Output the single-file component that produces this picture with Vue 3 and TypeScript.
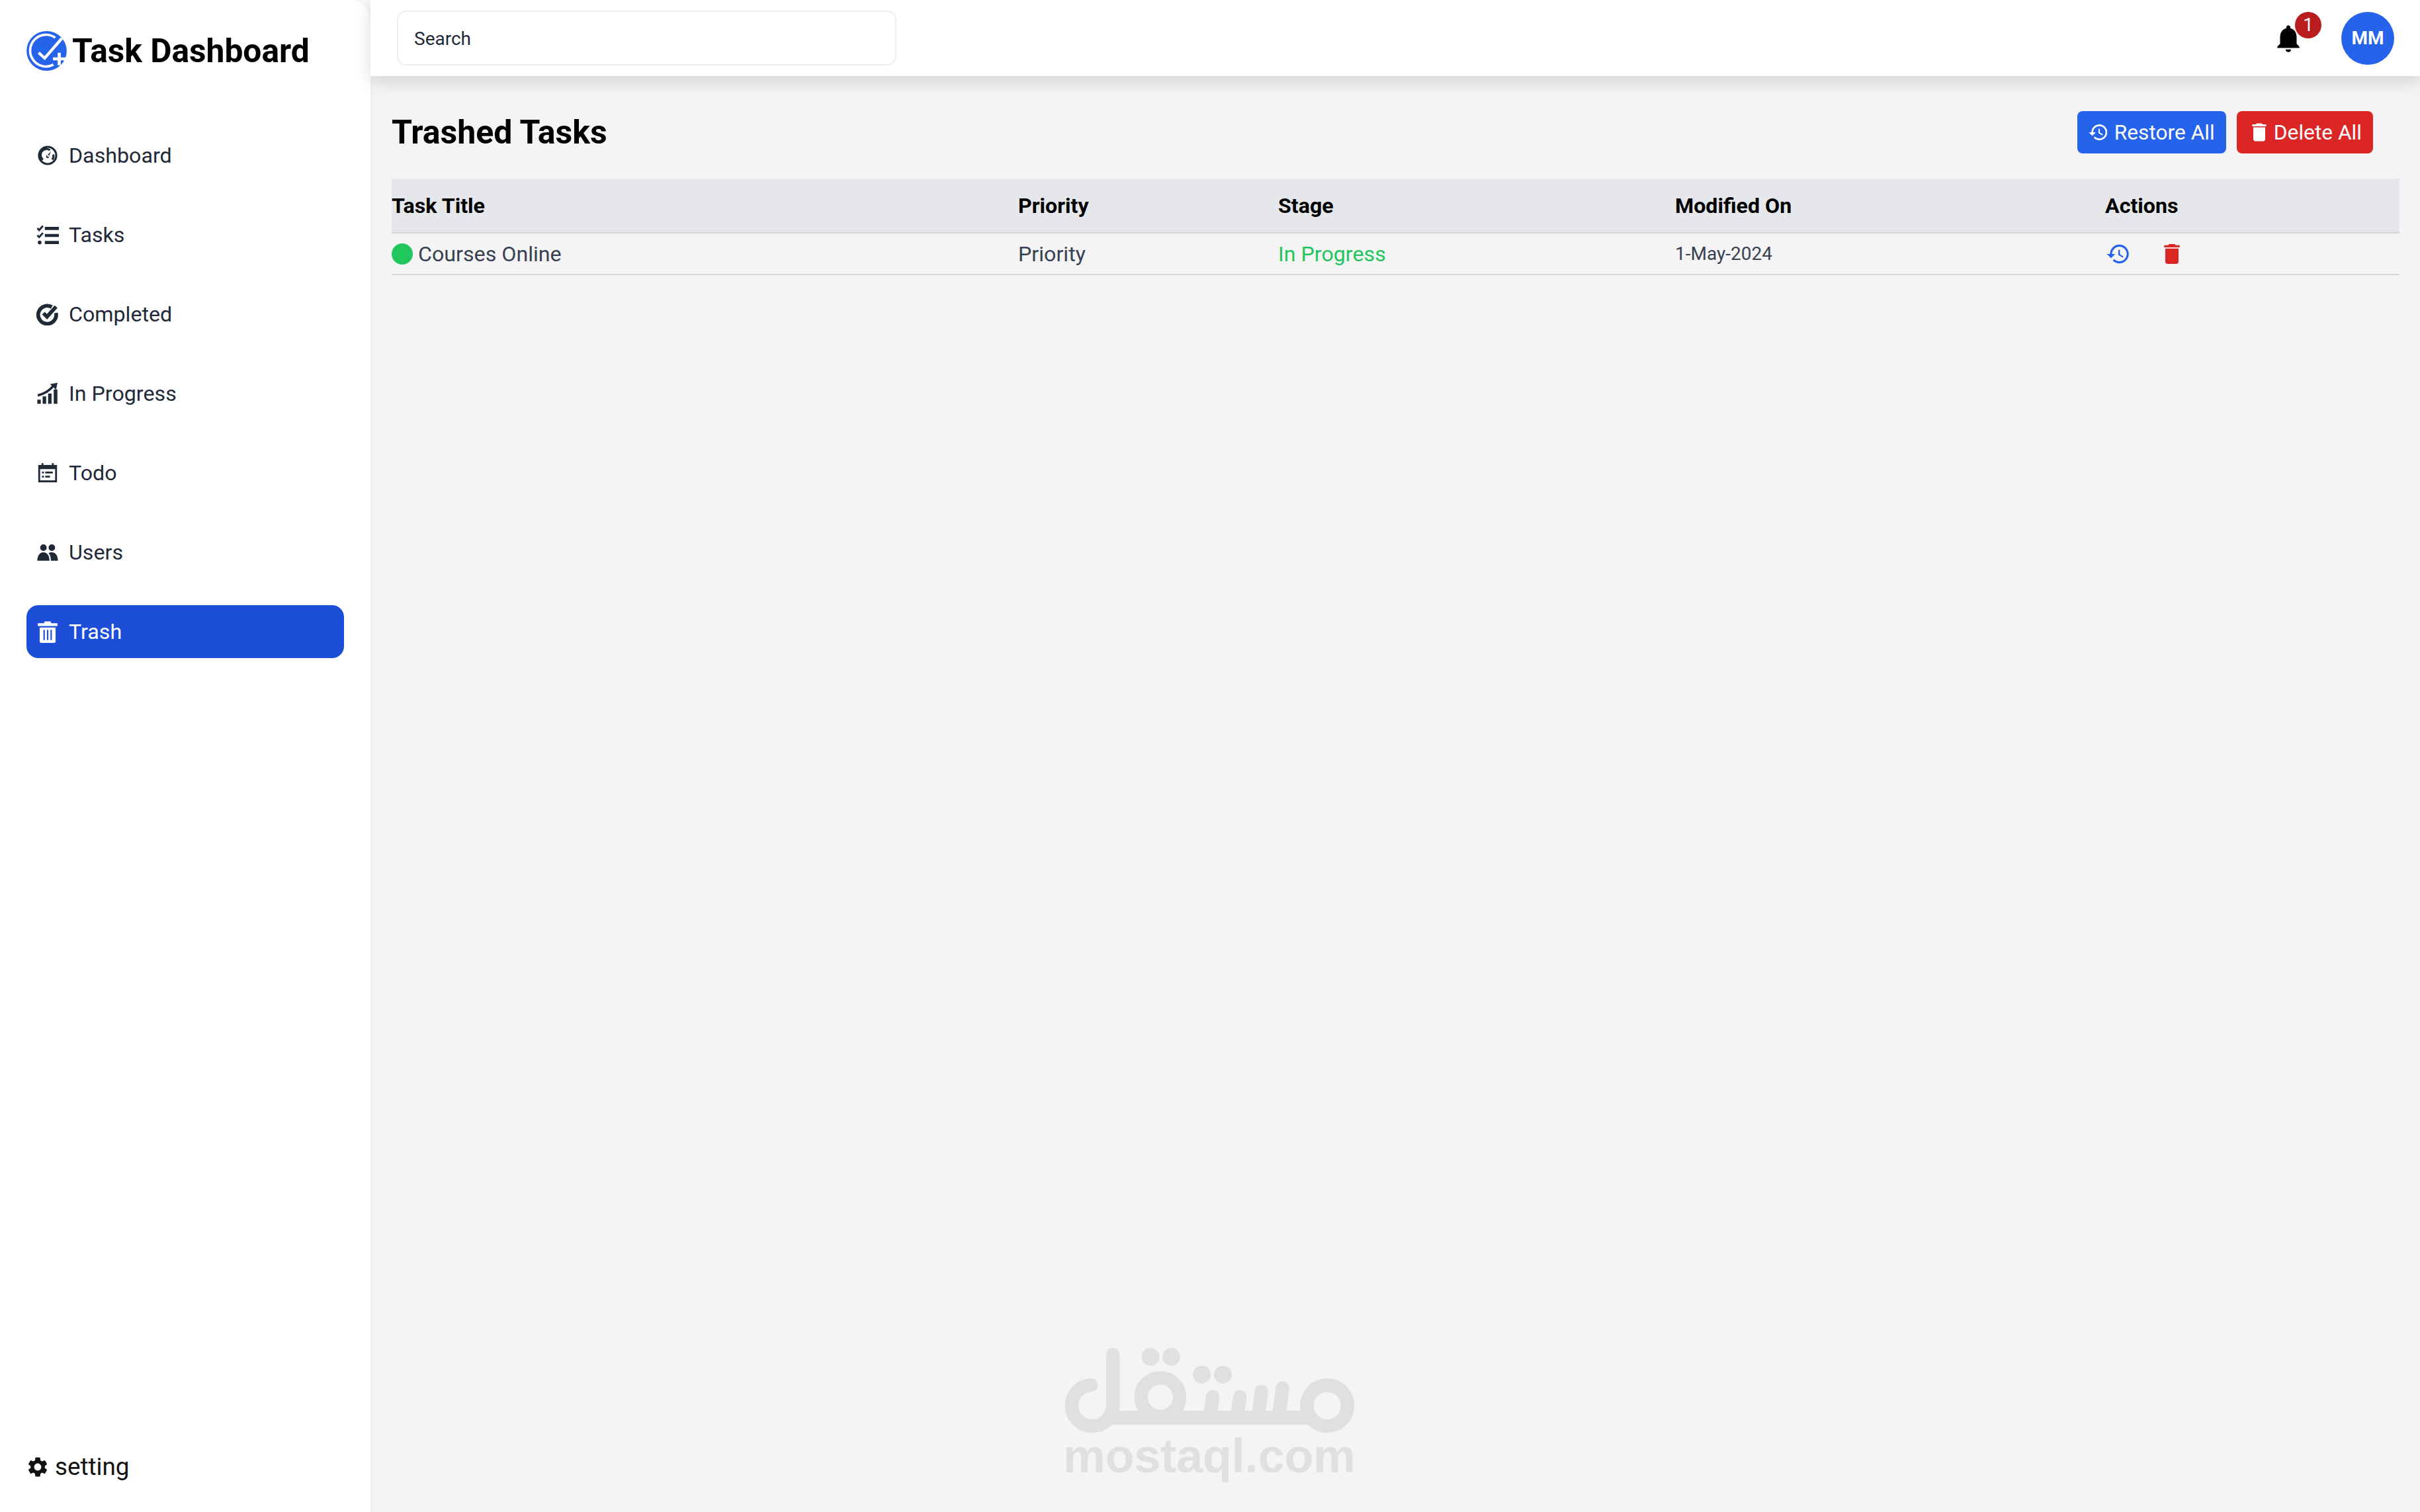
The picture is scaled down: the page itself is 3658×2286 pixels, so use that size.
<script setup lang="ts">
interface NavItem {
  label: string
  fill?: string
  line?: string
  sw?: number
  active?: boolean
}

const navItems: NavItem[] = [
  {
    label: 'Dashboard',
    fill: 'M10.3 13.2a1.7 1.7 0 1 0 3.4 0a1.7 1.7 0 1 0-3.4 0z M11 12.3 15.6 7.8 13 13.8z',
    line: 'M2.8 12a9.2 9.2 0 1 0 18.4 0a9.2 9.2 0 1 0-18.4 0z M7 16.5A6.2 6.2 0 0 1 14.5 6.4 M18 11a6.2 6.2 0 0 1-1 5.5',
    sw: 2.2,
  },
  {
    label: 'Tasks',
    fill: 'M9 3.6h15v3.2H9z M9 11.1h15v3.2H9z M9 18.6h15v3.2H9z M1.5 20.2a2 2 0 1 0 4 0a2 2 0 1 0-4 0z',
    line: 'M1 5l2 2 4-4.5 M1 12.5l2 2 4-4.5',
    sw: 2,
  },
  {
    label: 'Completed',
    line: 'M16.4 4.4A9.6 9.6 0 1 0 20.9 10.6 M7.5 11 11.3 14.8 21 4',
    sw: 4,
  },
  {
    label: 'In Progress',
    fill: 'M1 18.5h3.7V23H1z M6.7 15h3.7v8H6.7z M12.5 12h3.7v11h-3.7z M18.5 7.5h3.9V23h-3.9z M14.5 2 22.5 .5 21 8z',
    line: 'M1.5 14C8 12.5 14 9 18.5 3.5',
    sw: 2.6,
  },
  {
    label: 'Todo',
    fill: 'M2 3.5h3.5V1.5h2v2h9V1.5h2v2H22V22H2z M4 8v12h16V8z M6 10.5h2v2H6z M9.5 10.5h8v2h-8z M6 15h2v2H6z M9.5 15h5v2h-5z',
  },
  {
    label: 'Users',
    fill: 'M4 7a3.5 3.5 0 1 0 7 0a3.5 3.5 0 1 0-7 0z M13 7a3.5 3.5 0 1 0 7 0a3.5 3.5 0 1 0-7 0z M1 21C1 15 4 12 7.5 12C11 12 14 15 14 21z M15.5 21C15.5 17 14.5 14.5 13 13C14 12.3 15.3 12 16.5 12C20 12 23 15 23 21z',
  },
  {
    label: 'Trash',
    active: true,
    fill: 'M1.5 3h6.5l1-2h6l1 2h6.5v3H1.5z M3.5 7.5h17V22a2 2 0 0 1-2 2H5.5a2 2 0 0 1-2-2z M7.5 10v11h1.5V10z M11.25 10v11h1.5V10z M15 10v11h1.5V10z',
  },
]

const historyIcon =
  'M13 3c-4.97 0-9 4.03-9 9H1l3.89 3.89.07.14L9 12H6c0-3.87 3.13-7 7-7s7 3.13 7 7-3.13 7-7 7c-1.93 0-3.68-.79-4.94-2.06l-1.42 1.42C8.27 19.99 10.51 21 13 21c4.97 0 9-4.03 9-9s-4.03-9-9-9zm-1 5v5l4.28 2.54.72-1.21-3.5-2.08V8H12z'
const deleteIcon = 'M6 19c0 1.1.9 2 2 2h8c1.1 0 2-.9 2-2V7H6v12zM19 4h-3.5l-1-1h-5l-1 1H5v2h14V4z'
const bellIcon =
  'M12 22c1.1 0 2-.9 2-2h-4c0 1.1.9 2 2 2zm6-6v-5c0-3.07-1.64-5.64-4.5-6.32V4c0-.83-.67-1.5-1.5-1.5s-1.5.67-1.5 1.5v.68C7.63 5.36 6 7.92 6 11v5l-2 2v1h16v-1l-2-2z'
const gearIcon =
  'M19.14 12.94c.04-.3.06-.61.06-.94 0-.32-.02-.64-.07-.94l2.03-1.58c.18-.14.23-.41.12-.61l-1.92-3.32c-.12-.22-.37-.29-.59-.22l-2.39.96c-.5-.38-1.03-.7-1.62-.94l-.36-2.54c-.04-.24-.24-.41-.48-.41h-3.84c-.24 0-.43.17-.47.41l-.36 2.54c-.59.24-1.13.57-1.62.94l-2.39-.96c-.22-.08-.47 0-.59.22L2.74 8.87c-.12.21-.08.47.12.61l2.03 1.58c-.05.3-.09.63-.09.94s.02.64.07.94l-2.03 1.58c-.18.14-.23.41-.12.61l1.92 3.32c.12.22.37.29.59.22l2.39-.96c.5.38 1.03.7 1.62.94l.36 2.54c.05.24.24.41.48.41h3.84c.24 0 .44-.17.47-.41l.36-2.54c.59-.24 1.13-.56 1.62-.94l2.39.96c.22.08.47 0 .59-.22l1.92-3.32c.12-.22.07-.47-.12-.61l-2.01-1.58zM12 15.6c-1.98 0-3.6-1.62-3.6-3.6s1.62-3.6 3.6-3.6 3.6 1.62 3.6 3.6-1.62 3.6-3.6 3.6z'
</script>

<template>
  <div class="layout">
    <aside class="sidebar">
      <div class="brand">
        <svg class="brand-logo" viewBox="0 0 182 180">
          <ellipse cx="91" cy="90" rx="91" ry="90" fill="#2563eb" />
          <path d="M130 30A72 72 0 1 0 122 152" fill="none" stroke="#fff" stroke-width="11" />
          <path d="M55 98 82 123 160 33" fill="none" stroke="#fff" stroke-width="13" />
          <path d="M120 126h56M148 98v57" fill="none" stroke="#fff" stroke-width="14" />
        </svg>
        <span>Task Dashboard</span>
      </div>

      <nav class="nav">
        <a v-for="item in navItems" :key="item.label" class="nav-item" :class="{ active: item.active }">
          <svg class="nav-icon" viewBox="0 0 24 24">
            <path v-if="item.fill" :d="item.fill" fill="currentColor" fill-rule="evenodd" />
            <path v-if="item.line" :d="item.line" fill="none" stroke="currentColor" :stroke-width="item.sw" />
          </svg>
          <span>{{ item.label }}</span>
        </a>
      </nav>

      <div class="setting">
        <svg class="setting-icon" viewBox="0 0 24 24"><path :d="gearIcon" fill="currentColor" /></svg>
        <span>setting</span>
      </div>
    </aside>

    <div class="main">
      <header class="topbar">
        <input class="search" type="text" placeholder="Search" />
        <div class="topbar-right">
          <div class="bell">
            <svg viewBox="0 0 24 24"><path :d="bellIcon" fill="#000" /></svg>
            <span class="badge">1</span>
          </div>
          <div class="avatar">MM</div>
        </div>
      </header>

      <section class="content">
        <div class="title-row">
          <h1>Trashed Tasks</h1>
          <div class="title-actions">
            <button class="btn btn-blue">
              <svg class="btn-icon" viewBox="0 0 24 24"><path :d="historyIcon" fill="currentColor" /></svg>
              Restore All
            </button>
            <button class="btn btn-red">
              <svg class="btn-icon trash" viewBox="0 0 24 24"><path :d="deleteIcon" fill="currentColor" /></svg>
              Delete All
            </button>
          </div>
        </div>

        <table class="tasks">
          <thead>
            <tr>
              <th class="col-title">Task Title</th>
              <th class="col-priority">Priority</th>
              <th class="col-stage">Stage</th>
              <th class="col-date">Modified On</th>
              <th>Actions</th>
            </tr>
          </thead>
          <tbody>
            <tr>
              <td>
                <div class="task-name">
                  <span class="dot"></span>
                  Courses Online
                </div>
              </td>
              <td>Priority</td>
              <td class="stage">In Progress</td>
              <td class="date">1-May-2024</td>
              <td>
                <div class="row-actions">
                  <svg class="icon-restore" viewBox="0 0 24 24"><path :d="historyIcon" fill="#2563eb" /></svg>
                  <svg class="icon-delete" viewBox="0 0 24 24"><path :d="deleteIcon" fill="#dc2626" /></svg>
                </div>
              </td>
            </tr>
          </tbody>
        </table>
      </section>
    </div>

    <div class="watermark">
      <svg viewBox="148 115 1314 385" width="442" height="129">
        <g fill="none" stroke="#e0e0e0" stroke-width="61" stroke-linecap="round">
          <path d="M272 282A93 93 0 1 0 370 375V145" />
          <circle cx="584" cy="337" r="87" />
          <circle cx="1337" cy="375" r="92" />
          <path d="M820 335 810 405M943 335 933 405M1040 311 1028 405M1135 296 1120 405" />
        </g>
        <rect x="365" y="398" width="885" height="64" fill="#e0e0e0" />
        <g fill="#e0e0e0">
          <circle cx="540" cy="155" r="40" />
          <circle cx="633" cy="155" r="40" />
          <circle cx="771" cy="235" r="40" />
          <circle cx="866" cy="235" r="40" />
        </g>
      </svg>
      <span>mostaql.com</span>
    </div>
  </div>
</template>

<style scoped>
.layout {
  position: relative;
  display: flex;
  width: 3658px;
  height: 2286px;
  overflow: hidden;
  background: #f7f7f7;
  font-family: Roboto, "Liberation Sans", sans-serif;
}

.sidebar {
  display: flex;
  flex-direction: column;
  flex: 0 0 560px;
  box-sizing: border-box;
  padding: 47px 40px 46px;
  background: #fff;
  border-top-right-radius: 32px;
}

.brand {
  display: flex;
  align-items: center;
  gap: 8px;
  height: 60px;
  font-size: 49.7px;
  font-weight: 700;
  color: #000;
  white-space: nowrap;
}

.brand-logo {
  width: 61px;
  height: 60px;
  flex: none;
}

.nav {
  display: flex;
  flex-direction: column;
  gap: 40px;
  margin-top: 88px;
}

.nav-item {
  display: flex;
  align-items: center;
  gap: 16px;
  height: 80px;
  padding: 0 16px;
  border-radius: 18px;
  font-size: 32.2px;
  color: #1f2937;
}

.nav-item.active {
  background: #1d4ed8;
  color: #fff;
}

.nav-icon {
  width: 34px;
  height: 34px;
  margin: 0 -1px;
  flex: none;
}

.setting {
  display: flex;
  align-items: center;
  gap: 8px;
  margin-top: auto;
  margin-left: -1px;
  font-size: 36.8px;
  line-height: 44px;
  color: #111;
}

.setting-icon {
  width: 36px;
  height: 36px;
  flex: none;
}

.main {
  display: flex;
  flex-direction: column;
  flex: 1;
  min-width: 0;
}

.topbar {
  position: relative;
  z-index: 1;
  display: flex;
  align-items: center;
  justify-content: space-between;
  flex: 0 0 115px;
  box-sizing: border-box;
  padding: 0 39px 0 40px;
  background: #fff;
  box-shadow: 0 8px 24px rgba(0, 0, 0, 0.14);
}

.search {
  width: 755px;
  height: 83px;
  margin-top: -1px;
  box-sizing: border-box;
  padding: 3px 24px 0;
  border: 2px solid #eceef1;
  border-radius: 14px;
  outline: none;
  background: #fff;
  font-family: inherit;
  font-size: 28px;
  color: #1f2937;
}

.search::placeholder {
  color: #1f2937;
  opacity: 1;
}

.topbar-right {
  display: flex;
  align-items: center;
  gap: 55px;
}

.bell {
  position: relative;
  width: 50px;
  height: 50px;
}

.bell svg {
  display: block;
  width: 50px;
  height: 50px;
}

.badge {
  position: absolute;
  top: -15px;
  left: 35px;
  width: 40px;
  height: 40px;
  border-radius: 50%;
  background: #b91c1c;
  color: #fff;
  font-size: 28px;
  line-height: 40px;
  text-align: center;
}

.avatar {
  display: flex;
  align-items: center;
  justify-content: center;
  width: 80px;
  height: 80px;
  border-radius: 50%;
  background: #2563eb;
  color: #fff;
  font-size: 28px;
  font-weight: 700;
}

.content {
  flex: 1;
  padding: 53px 31px 0 32px;
  background: #f4f4f4;
  box-shadow: inset 8px 0 8px -5px rgba(0, 0, 0, 0.03);
}

.title-row {
  display: flex;
  align-items: center;
  justify-content: space-between;
  height: 64px;
  padding-right: 40px;
}

h1 {
  margin: 0;
  font-size: 50px;
  font-weight: 700;
  color: #000;
}

.title-actions {
  display: flex;
  gap: 16px;
}

.btn {
  display: flex;
  align-items: center;
  height: 64px;
  padding: 0 17px 0 16px;
  border: 0;
  border-radius: 8px;
  color: #fff;
  font-family: inherit;
  font-size: 31.7px;
}

.btn-blue {
  background: #2563eb;
}

.btn-red {
  background: #dc2626;
}

.btn-icon {
  width: 32px;
  height: 32px;
  margin-right: 8px;
}

.btn-icon.trash {
  width: 36px;
  height: 36px;
  margin-right: 4px;
}

.tasks {
  width: 3035px;
  margin-top: 38px;
  border-collapse: collapse;
  table-layout: fixed;
  font-size: 32.2px;
  color: #374151;
}

.col-title {
  width: 947px;
}

.col-priority {
  width: 393px;
}

.col-stage {
  width: 600px;
}

.col-date {
  width: 650px;
}

th {
  height: 81px;
  padding: 0;
  background: #e5e7eb;
  border-bottom: 2px solid #d1d5db;
  color: #000;
  font-weight: 700;
  text-align: left;
}

td {
  height: 61px;
  padding: 0;
  border-bottom: 2px solid #d1d5db;
}

.task-name {
  display: flex;
  align-items: center;
  gap: 8px;
}

.dot {
  width: 32px;
  height: 32px;
  border-radius: 50%;
  background: #22c55e;
}

.stage {
  color: #22c55e;
}

.date {
  font-size: 28px;
}

.row-actions {
  display: flex;
  align-items: center;
}

.icon-restore {
  width: 38px;
  height: 38px;
  margin-left: 1px;
}

.icon-delete {
  width: 40px;
  height: 40px;
  margin-left: 42px;
}

.watermark {
  position: absolute;
  left: 1607px;
  top: 2038px;
  display: flex;
  flex-direction: column;
  align-items: center;
  width: 442px;
  color: #e0e0e0;
}

.watermark svg {
  display: block;
}

.watermark span {
  margin-top: -3px;
  font-family: "Liberation Sans", sans-serif;
  font-size: 71.7px;
  font-weight: 700;
  line-height: 74px;
}
</style>

<style>
body {
  margin: 0;
}
</style>
